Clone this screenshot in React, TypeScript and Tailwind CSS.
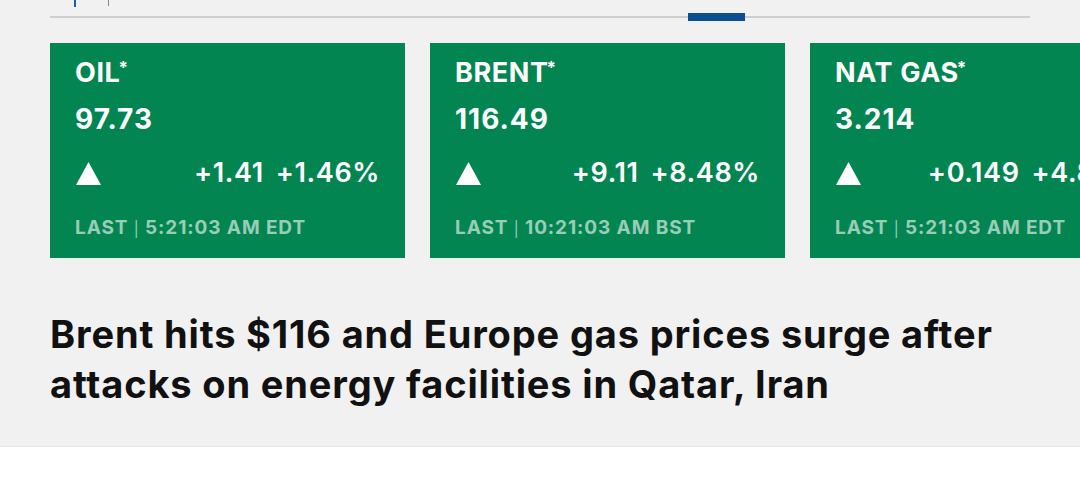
import React from "react";

type Quote = {
  name: string;
  price: string;
  change: string;
  pct: string;
  time: string;
};

const quotes: Quote[] = [
  { name: "OIL", price: "97.73", change: "+1.41", pct: "+1.46%", time: "5:21:03 AM EDT" },
  { name: "BRENT", price: "116.49", change: "+9.11", pct: "+8.48%", time: "10:21:03 AM BST" },
  { name: "NAT GAS", price: "3.214", change: "+0.149", pct: "+4.86%", time: "5:21:03 AM EDT" },
];

function Card({ q }: { q: Quote }) {
  return (
    <div className="w-[355px] h-[215px] shrink-0 bg-[#038552] text-white pl-[25px] pr-[25px] pt-[12px] flex flex-col">
      <div className="text-[27px] leading-[36px] font-bold tracking-[0.6px]">
        {q.name}
        <span className="text-[17px] align-top leading-[26px] tracking-normal ml-[-2px]">*</span>
      </div>
      <div className="text-[28px] leading-[36px] font-bold mt-[10px] tracking-[1px]">{q.price}</div>
      <div className="flex items-center justify-between mt-[18px] h-[36px]">
        <svg width="25" height="23" viewBox="0 0 25 23" className="ml-[1px]">
          <polygon points="12.5,0 25,23 0,23" fill="#ffffff" />
        </svg>
        <div className="text-[27px] leading-[36px] font-semibold whitespace-nowrap flex gap-[12px] tracking-[0.6px]">
          <span>{q.change}</span>
          <span>{q.pct}</span>
        </div>
      </div>
      <div className="text-[19px] leading-[24px] font-bold text-white/60 mt-[25px] whitespace-nowrap tracking-[0.9px]">
        LAST <span className="text-[15px] font-normal">|</span> {q.time}
      </div>
    </div>
  );
}

export default function App() {
  return (
    <div className="w-[1080px] h-[494px] bg-white overflow-hidden" style={{ fontFamily: "Inter, 'Open Sans', sans-serif" }}>
      <div className="bg-[#f1f1f1] h-[447px] border-b border-[#e8e8e8]">
        <div className="relative h-[43px]">
          <div className="absolute left-[74px] top-0 w-[2px] h-[7px] bg-[#1d5fa0]" />
          <div className="absolute left-[108px] top-0 w-[1px] h-[6px] bg-[#888]" />
          <div className="absolute left-[50px] top-[16px] w-[980px] h-[2px] bg-[#cfcfcf]" />
          <div className="absolute left-[688px] top-[13px] w-[57px] h-[8px] bg-[#0a4f92]" />
        </div>
        <div className="flex gap-[25px] pl-[50px] overflow-hidden">
          {quotes.map((q) => (
            <Card key={q.name} q={q} />
          ))}
        </div>
        <h1 className="pl-[50px] pr-[40px] mt-[51px] text-[38px] leading-[50px] font-bold text-[#111] tracking-[0.85px]">
          Brent hits $116 and Europe gas prices surge after attacks on energy facilities in Qatar, Iran
        </h1>
      </div>
    </div>
  );
}
